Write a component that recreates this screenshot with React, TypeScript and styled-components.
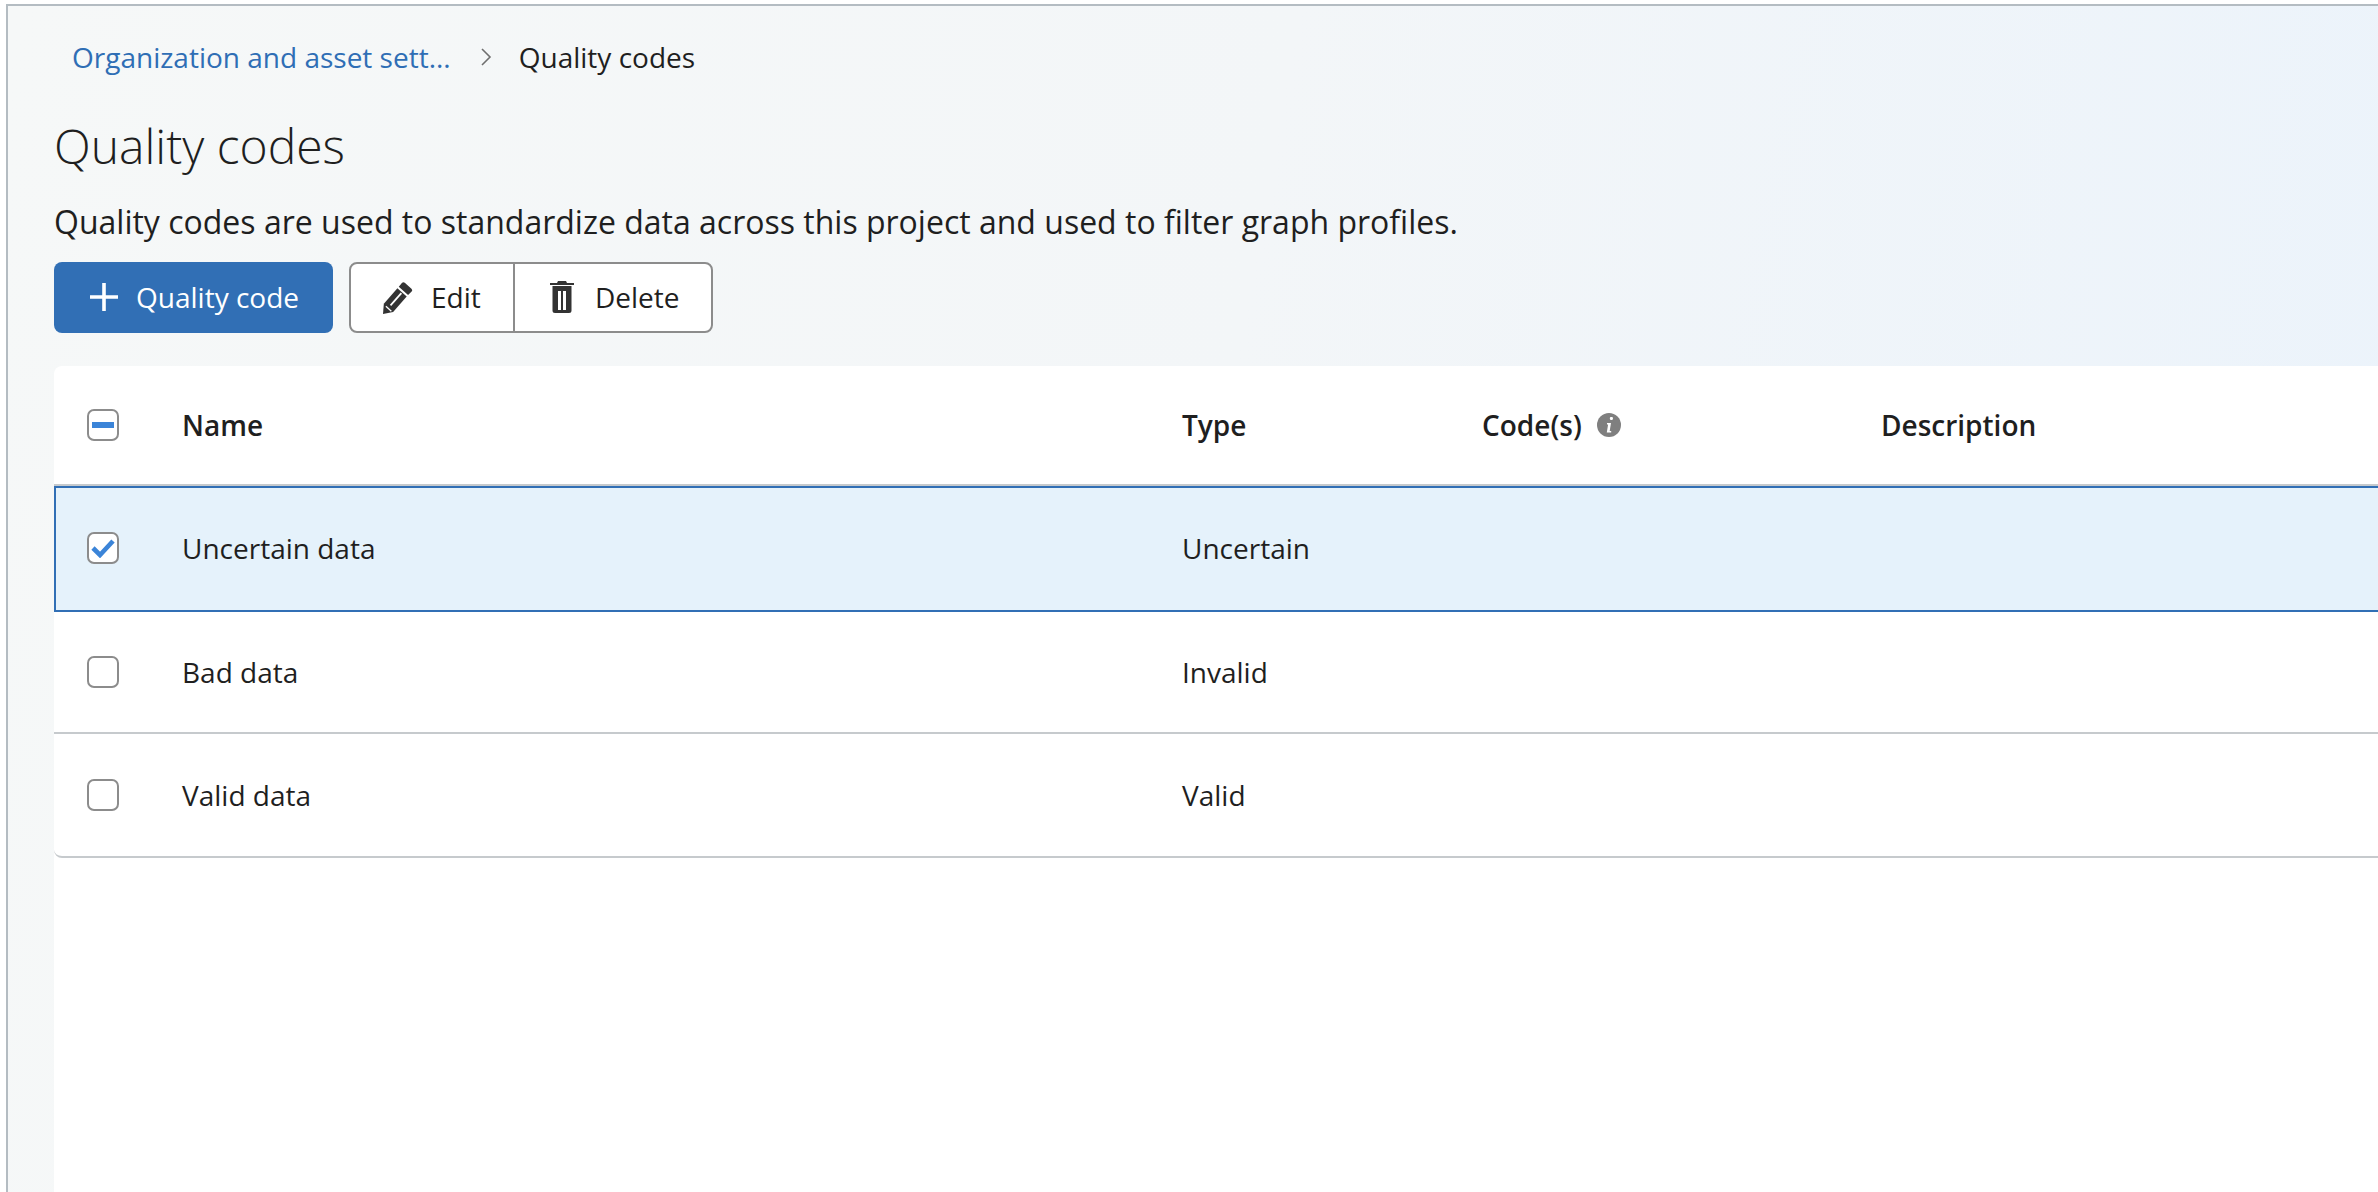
import React from 'react';
import styled, { createGlobalStyle } from 'styled-components';

const GlobalStyle = createGlobalStyle`
  html, body {
    margin: 0;
    height: 100%;
    background: #fff;
    font-family: "Open Sans", "Noto Sans", sans-serif;
    color: #1f1f1f;
    overflow: hidden;
  }
`;

const Frame = styled.div`
  box-sizing: border-box;
  height: 1192px;
  padding-top: 4px;
`;

const Page = styled.div`
  box-sizing: border-box;
  height: 1188px;
  margin-left: 6px;
  border-top: 2px solid #b4bcc2;
  border-left: 2px solid #b4bcc2;
  padding: 0 0 0 46px;
  background: linear-gradient(100deg, #f6f8f8 0%, #f3f6f8 50%, #ebf3fb 100%);
  display: flex;
  flex-direction: column;
`;

const Breadcrumbs = styled.nav`
  display: flex;
  align-items: center;
  height: 36px;
  margin-top: 33px;
  padding-left: 18px;
  font-size: 28px;
`;

const Crumb = styled.a`
  color: #2f6eb5;
`;

const CurrentCrumb = styled.span`
  color: #1f1f1f;
`;

const Chevron = styled.svg`
  width: 12px;
  height: 20px;
  margin: 0 27px 0 29px;
`;

const Title = styled.h1`
  margin: 39px 0 0;
  font-size: 48px;
  line-height: 64px;
  font-weight: 300;
  color: #1f1f1f;
`;

const Description = styled.p`
  margin: 25px 0 0;
  font-size: 32px;
  line-height: 38px;
  color: #1f1f1f;
`;

const Toolbar = styled.div`
  display: flex;
  gap: 16px;
  margin-top: 21px;
`;

const PrimaryButton = styled.button`
  box-sizing: border-box;
  display: flex;
  align-items: center;
  gap: 18px;
  width: 279px;
  height: 71px;
  padding: 0 0 1px 36px;
  border: 0;
  border-radius: 8px;
  background: #316fb5;
  color: #fff;
  font: 400 28px "Open Sans", sans-serif;
`;

const ButtonGroup = styled.div`
  box-sizing: border-box;
  display: flex;
  height: 71px;
  border: 2px solid #8c8c8c;
  border-radius: 8px;
  background: #fff;
`;

const GroupButton = styled.button<{ $width: number; $gap: number; $pad: number; $divider?: boolean }>`
  box-sizing: border-box;
  display: flex;
  align-items: center;
  gap: ${(p) => p.$gap}px;
  width: ${(p) => p.$width}px;
  padding: 0 0 1px ${(p) => p.$pad}px;
  border: 0;
  border-right: ${(p) => (p.$divider ? '2px solid #8c8c8c' : '0')};
  background: transparent;
  color: #1f1f1f;
  font: 400 28px "Open Sans", sans-serif;
`;

const Card = styled.div`
  flex: 1;
  margin-top: 33px;
  background: #fff;
  border-top-left-radius: 8px;
`;

const columns = '128px 1000px 300px 399px 1fr';

const HeaderRow = styled.div`
  box-sizing: border-box;
  display: grid;
  grid-template-columns: ${columns};
  align-items: center;
  height: 120px;
  border-bottom: 2px solid #c6cacd;
  font-size: 28px;
  font-weight: 600;
`;

const Row = styled.div<{ $selected?: boolean; $last?: boolean }>`
  box-sizing: border-box;
  display: grid;
  grid-template-columns: ${columns};
  align-items: center;
  height: ${(p) => (p.$selected ? '126px' : p.$last ? '124px' : '122px')};
  font-size: 28px;
  border-bottom: 2px solid ${(p) => (p.$selected ? '#316fb5' : '#c6cacd')};
  ${(p) => p.$last && 'border-bottom-left-radius: 8px;'}
  ${(p) =>
    p.$selected &&
    `
    padding-bottom: 2px;
    background: #e5f2fb;
    border-top: 2px solid #316fb5;
    box-shadow: inset 2px 0 0 #316fb5;
  `}
`;

const CheckCell = styled.div`
  padding-left: 33px;
  display: flex;
  align-items: center;
`;

const Checkbox = styled.span`
  box-sizing: border-box;
  display: flex;
  align-items: center;
  justify-content: center;
  width: 32px;
  height: 32px;
  border: 2px solid #8c8c8c;
  border-radius: 7px;
  background: #fff;
`;

const HeadWithIcon = styled.div`
  display: flex;
  align-items: center;
  gap: 15px;
`;

const Info = styled.svg`
  width: 24px;
  height: 24px;
`;

const rows = [
  { name: 'Uncertain data', type: 'Uncertain', selected: true },
  { name: 'Bad data', type: 'Invalid', selected: false },
  { name: 'Valid data', type: 'Valid', selected: false, last: true },
];

export default function App() {
  return (
    <Frame>
      <GlobalStyle />
      <Page>
        <Breadcrumbs>
          <Crumb>Organization and asset sett...</Crumb>
          <Chevron viewBox="0 0 12 20">
            <path d="M2 2l8 8-8 8" fill="none" stroke="#6f6f6f" strokeWidth="1.6" />
          </Chevron>
          <CurrentCrumb>Quality codes</CurrentCrumb>
        </Breadcrumbs>
        <Title>Quality codes</Title>
        <Description>
          Quality codes are used to standardize data across this project and used to filter graph profiles.
        </Description>
        <Toolbar>
          <PrimaryButton>
            <svg width="28" height="28" viewBox="0 0 28 28">
              <path d="M14 0v28M0 14h28" stroke="#fff" strokeWidth="3.6" />
            </svg>
            Quality code
          </PrimaryButton>
          <ButtonGroup>
            <GroupButton $width={164} $gap={15} $pad={32} $divider>
              <svg width="33" height="33" viewBox="0 0 32 32">
                <path d="M0 32l.8-10L14 7l9 8L9.800 30z" fill="#333" />
                <path d="M7.300 23.700L17.800 11.700" stroke="#fff" strokeWidth="1.700" />
                <path d="M2.800 24.600l5.300 4.700" stroke="#fff" strokeWidth="1.300" />
                <path d="M15.300 5.500l3-3.600a2 2 0 0 1 2.800-.2l6.500 5.800a2 2 0 0 1 .2 2.800l-3.500 3.200z" fill="#333" />
              </svg>
              Edit
            </GroupButton>
            <GroupButton $width={196} $gap={21} $pad={35}>
              <svg width="24" height="32" viewBox="0 0 24 32">
                <path
                  d="M8 0h8l1 2H24v2H0V2H7zM2.500 5h19v24.500a2.500 2.500 0 0 1-2.500 2.500H5a2.500 2.500 0 0 1-2.500-2.500zM8 10v19h3V10zm5 0v19h3V10z"
                  fill="#333"
                  fillRule="evenodd"
                />
              </svg>
              Delete
            </GroupButton>
          </ButtonGroup>
        </Toolbar>
        <Card>
          <HeaderRow>
            <CheckCell>
              <Checkbox>
                <svg width="24" height="8" viewBox="0 0 24 8">
                  <rect x="1" y="1" width="22" height="6" fill="#3b84d8" />
                </svg>
              </Checkbox>
            </CheckCell>
            <div>Name</div>
            <div>Type</div>
            <HeadWithIcon>
              Code(s)
              <Info viewBox="0 0 24 24">
                <circle cx="12" cy="12" r="12" fill="#7f7f7f" />
                <path d="M12.800 5.500a1.600 1.600 0 1 1 0 .01zM10 10h4l-1.300 8h1.500v1.500H9.800l1.300-8H10z" fill="#fff" />
              </Info>
            </HeadWithIcon>
            <div>Description</div>
          </HeaderRow>
          {rows.map((row) => (
            <Row key={row.name} $selected={row.selected} $last={row.last}>
              <CheckCell>
                <Checkbox>
                  {row.selected && (
                    <svg width="26" height="20" viewBox="0 0 26 20">
                      <path d="M3 10l7 7L23 3" fill="none" stroke="#3b84d8" strokeWidth="4.600" />
                    </svg>
                  )}
                </Checkbox>
              </CheckCell>
              <div>{row.name}</div>
              <div>{row.type}</div>
              <div />
              <div />
            </Row>
          ))}
        </Card>
      </Page>
    </Frame>
  );
}
